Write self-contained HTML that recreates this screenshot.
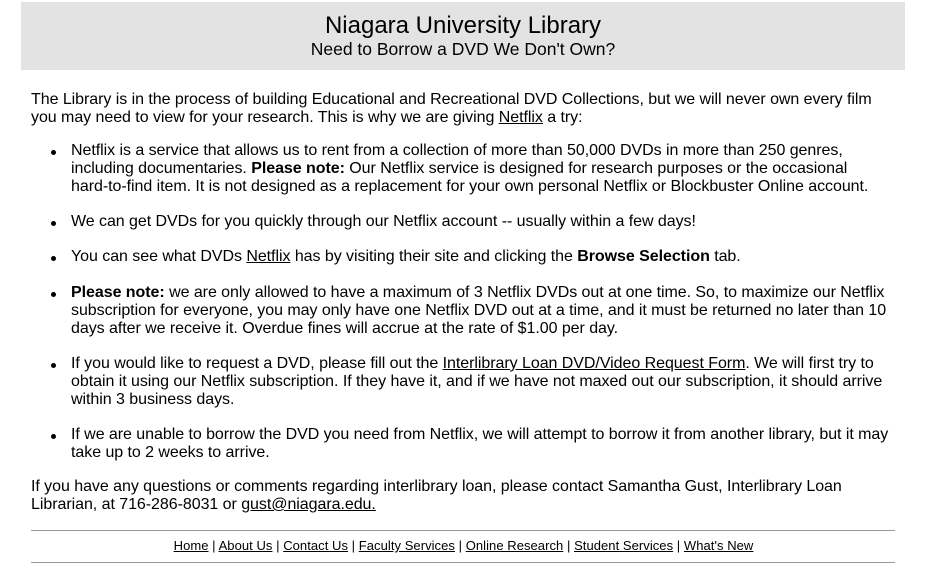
<!DOCTYPE html>
<html><head><meta charset="utf-8"><style>
body{margin:0;background:#fff;font-family:"Liberation Sans",Arial,sans-serif;color:#000;width:927px;height:569px;overflow:hidden;position:relative}
.hd{position:absolute;left:21px;top:2px;width:884px;height:68px;background:#e3e3e3;text-align:center}
.t1{position:absolute;left:0;right:0;top:10px;font-size:24px;line-height:27px}
.t2{position:absolute;left:0;right:0;top:37px;font-size:17.5px;line-height:21px}
.l{position:absolute;white-space:nowrap;font-size:16px;line-height:18px;letter-spacing:-0.05px}
.b{left:71px}
.p{left:31px}
.dot{position:absolute;left:51px;width:5px;height:5px;border-radius:50%;background:#000}
a{color:#000;text-decoration:underline}
hr{position:absolute;left:31px;width:864px;margin:0;border:0;border-top:1px solid #999}
.nav{position:absolute;left:0;width:927px;top:538px;text-align:center;font-size:13px;line-height:16px;letter-spacing:0.05px}
</style></head><body>
<div class="hd"><div class="t1">Niagara University Library</div><div class="t2">Need to Borrow a DVD We Don't Own?</div></div>
<div class="l p" style="top:91px">The Library is in the process of building Educational and Recreational DVD Collections, but we will never own every film</div>
<div class="l p" style="top:109px">you may need to view for your research. This is why we are giving <a>Netflix</a> a try:</div>

<div class="dot" style="top:150px"></div>
<div class="l b" style="top:142px">Netflix is a service that allows us to rent from a collection of more than 50,000 DVDs in more than 250 genres,</div>
<div class="l b" style="top:160px">including documentaries. <b>Please note:</b> Our Netflix service is designed for research purposes or the occasional</div>
<div class="l b" style="top:178px">hard-to-find item. It is not designed as a replacement for your own personal Netflix or Blockbuster Online account.</div>

<div class="dot" style="top:221px"></div>
<div class="l b" style="top:213px">We can get DVDs for you quickly through our Netflix account -- usually within a few days!</div>

<div class="dot" style="top:256px"></div>
<div class="l b" style="top:248px">You can see what DVDs <a>Netflix</a> has by visiting their site and clicking the <b>Browse Selection</b> tab.</div>

<div class="dot" style="top:292px"></div>
<div class="l b" style="top:284px"><b>Please note:</b> we are only allowed to have a maximum of 3 Netflix DVDs out at one time. So, to maximize our Netflix</div>
<div class="l b" style="top:302px">subscription for everyone, you may only have one Netflix DVD out at a time, and it must be returned no later than 10</div>
<div class="l b" style="top:320px">days after we receive it. Overdue fines will accrue at the rate of $1.00 per day.</div>

<div class="dot" style="top:363px"></div>
<div class="l b" style="top:355px">If you would like to request a DVD, please fill out the <a>Interlibrary Loan DVD/Video Request Form</a>. We will first try to</div>
<div class="l b" style="top:373px">obtain it using our Netflix subscription. If they have it, and if we have not maxed out our subscription, it should arrive</div>
<div class="l b" style="top:391px">within 3 business days.</div>

<div class="dot" style="top:434px"></div>
<div class="l b" style="top:426px">If we are unable to borrow the DVD you need from Netflix, we will attempt to borrow it from another library, but it may</div>
<div class="l b" style="top:444px">take up to 2 weeks to arrive.</div>

<div class="l p" style="top:478px">If you have any questions or comments regarding interlibrary loan, please contact Samantha Gust, Interlibrary Loan</div>
<div class="l p" style="top:496px">Librarian, at 716-286-8031 or <a>gust@niagara.edu.</a></div>

<hr style="top:530px">
<div class="nav"><a>Home</a> | <a>About Us</a> | <a>Contact Us</a> | <a>Faculty Services</a> | <a>Online Research</a> | <a>Student Services</a> | <a>What's New</a></div>
<hr style="top:562px">
</body></html>
